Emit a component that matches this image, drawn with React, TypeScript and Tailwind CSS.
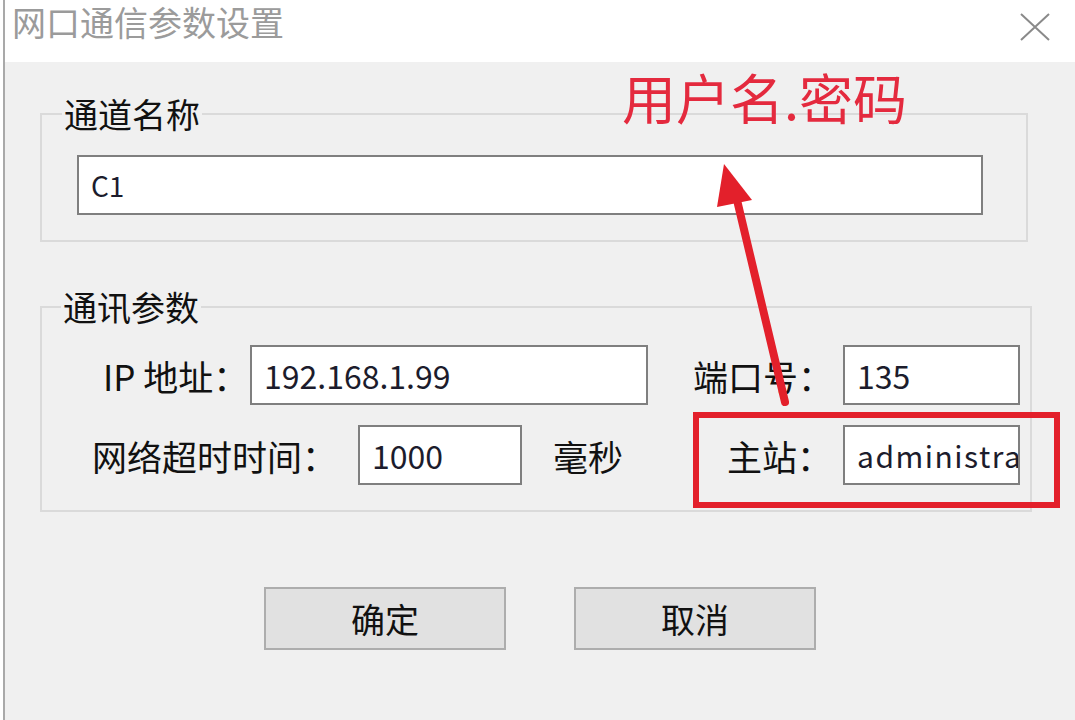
import React from "react";

const F = "font-['Noto_Sans_CJK_SC','Noto_Sans',sans-serif]";

function Box({ w, children, cls = "" }: { w: string; children: React.ReactNode; cls?: string }) {
  return (
    <div
      className={`${w} h-[60px] shrink-0 border-2 border-[#7f7f7f] bg-white flex items-center pl-[12px] overflow-hidden whitespace-nowrap text-[#1c1c2c] ${cls}`}
    >
      {children}
    </div>
  );
}

export default function App() {
  return (
    <div className={`${F} relative w-[1075px] h-[720px] overflow-hidden bg-white flex text-[#111]`}>
      <div className="w-[3px] shrink-0 bg-white" />
      <div className="w-[2px] shrink-0 bg-[#a9a9a9]" />
      <div className="flex-1 flex flex-col">
        {/* title bar */}
        <div className="h-[62px] shrink-0 bg-white flex items-start justify-between">
          <div className="shrink-0 whitespace-nowrap pl-[7px] pt-[2px] text-[34px] leading-[40px] text-[#9b9b9b]">网口通信参数设置</div>
          <svg className="mr-[24px] mt-[12px] shrink-0" width="32" height="30" viewBox="0 0 32 30">
            <path d="M2 2 L30 28 M30 2 L2 28" stroke="#8a8a8a" strokeWidth="2" fill="none" />
          </svg>
        </div>
        {/* body */}
        <div className="flex-1 bg-[#f0f0f0] flex flex-col">
          <fieldset className="ml-[35px] mt-[35px] w-[988px] border-2 border-[#dadada] pt-[24px] pb-[25px]">
            <legend className="ml-[20px] px-[2px] text-[34px] leading-none">通道名称</legend>
            <div className="pl-[35px]">
              <Box w="w-[906px]" cls="h-[58px]">
                <span className="text-[28px] leading-none">C1</span>
              </Box>
            </div>
          </fieldset>

          <fieldset className="ml-[35px] mt-[48px] w-[992px] border-2 border-[#dadada] pt-[21px] pb-[25px]">
            <legend className="ml-[19px] px-[2px] text-[34px] leading-none">通讯参数</legend>
            <div className="flex items-center">
              <div className="w-[208px] shrink-0 pl-[61px] text-[35px] leading-none whitespace-nowrap">IP 地址：</div>
              <Box w="w-[398px]">
                <span className="text-[32px] leading-none">192.168.1.99</span>
              </Box>
              <div className="w-[195px] shrink-0 pl-[45px] text-[35px] leading-none whitespace-nowrap">端口号：</div>
              <Box w="w-[177px]">
                <span className="text-[32px] leading-none">135</span>
              </Box>
            </div>
            <div className="mt-[20px] flex items-center">
              <div className="w-[316px] shrink-0 pl-[50px] text-[35px] leading-none whitespace-nowrap">网络超时时间：</div>
              <Box w="w-[164px]">
                <span className="text-[32px] leading-none">1000</span>
              </Box>
              <div className="w-[321px] shrink-0 flex items-center text-[35px] leading-none whitespace-nowrap">
                <span className="ml-[31px]">毫秒</span>
                <span className="ml-[104px]">主站：</span>
              </div>
              <Box w="w-[177px]">
                <span className="text-[30px] leading-none tracking-[1.5px]">administrator</span>
              </Box>
            </div>
          </fieldset>

          <div className="mt-[75px] flex justify-center gap-[68px]">
            <div className="w-[242px] h-[63px] border-2 border-[#adadad] bg-[#e1e1e1] flex items-center justify-center text-[34px] leading-none">
              确定
            </div>
            <div className="w-[242px] h-[63px] border-2 border-[#adadad] bg-[#e1e1e1] flex items-center justify-center text-[34px] leading-none">
              取消
            </div>
          </div>
        </div>
      </div>

      {/* annotations */}
      <div className="absolute left-[622px] top-[70px] text-[54px] leading-none text-[#e42a3e]">用户名.密码</div>
      <svg className="absolute left-0 top-0 pointer-events-none" width="1075" height="720" viewBox="0 0 1075 720">
        <line x1="785" y1="402" x2="737" y2="200" stroke="#e3202b" strokeWidth="8" strokeLinecap="round" />
        <polygon points="724,164 717,207 752,200" fill="#e3202b" />
        <rect x="696" y="415" width="361" height="90" fill="none" stroke="#e3202b" strokeWidth="6" />
      </svg>
    </div>
  );
}
